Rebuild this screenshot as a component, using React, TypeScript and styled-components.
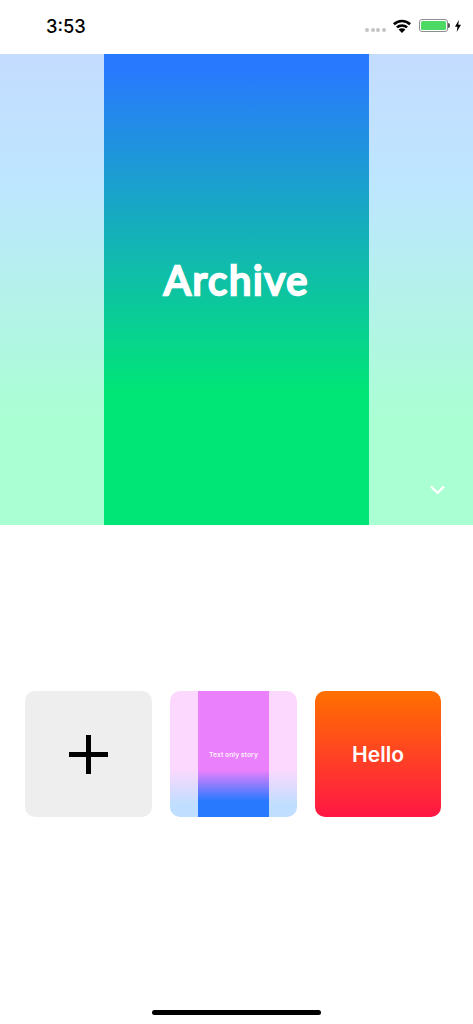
import styled, { createGlobalStyle } from "styled-components";

const GlobalStyle = createGlobalStyle`
  html, body {
    margin: 0;
    padding: 0;
    background: #ffffff;
  }
  * {
    box-sizing: border-box;
  }
`;

const heroGradient = "linear-gradient(180deg, #2979ff 3%, #00e676 72%)";
const heroSideGradient =
  "linear-gradient(180deg, #c4dcff 0%, #bde6ff 28%, #b4f2ea 52%, #aaffd3 78%, #aaffd3 100%)";
const pinkGradient = "linear-gradient(180deg, #ea80fc 63%, #2979ff 87%)";
const pinkSideGradient = "linear-gradient(180deg, #fdd8fe 62%, #c0deff 90%)";

export default function App() {
  return (
    <Screen>
      <GlobalStyle />
      <StatusBar>
        <Time>3:53</Time>
        <StatusIcons>
          <SignalDots>
            <Dot />
            <Dot />
            <Dot />
            <Dot />
          </SignalDots>
          <svg width="18" height="14" viewBox="0 0 18 14">
            <path d="M0.9 5.3C5.5 0.9 12.5 0.9 17.1 5.3" fill="none" stroke="#000" strokeWidth="2.6" />
            <path d="M3.9 8.4C6.8 5.8 11.2 5.8 14.1 8.4" fill="none" stroke="#000" strokeWidth="2.6" />
            <path d="M5.6 10.4C7.6 8.7 10.4 8.7 12.4 10.4L9 14Z" fill="#000" />
          </svg>
          <Battery>
            <BatteryFill />
          </Battery>
          <svg width="6" height="12" viewBox="0 0 6 12">
            <path d="M3.8 0L0 6.8H2.5L1.7 12L6 4.8H3.3Z" fill="#000" />
          </svg>
        </StatusIcons>
      </StatusBar>

      <Hero>
        <Side $gradient={heroSideGradient} />
        <Center $gradient={heroGradient}>
          <HeroTitle>Archive</HeroTitle>
        </Center>
        <Side $gradient={heroSideGradient} />
        <Chevron width="15" height="10" viewBox="0 0 15 10">
          <path d="M1 1.4L7.5 7.9L14 1.4" fill="none" stroke="#fff" strokeWidth="2.2" />
        </Chevron>
      </Hero>

      <Thumbs>
        <AddCard>
          <svg width="39" height="39" viewBox="0 0 39 39">
            <path d="M19.5 0V39M0 19.5H39" stroke="#000" strokeWidth="5" />
          </svg>
        </AddCard>
        <StoryCard>
          <Side $gradient={pinkSideGradient} />
          <Center $gradient={pinkGradient}>
            <StoryText>Text only story</StoryText>
          </Center>
          <Side $gradient={pinkSideGradient} />
        </StoryCard>
        <HelloCard>Hello</HelloCard>
      </Thumbs>

      <HomeIndicator />
    </Screen>
  );
}

const Screen = styled.div`
  position: relative;
  width: 473px;
  height: 1024px;
  overflow: hidden;
  background: #ffffff;
  font-family: Inter, "Liberation Sans", sans-serif;
`;

const StatusBar = styled.div`
  display: flex;
  align-items: center;
  justify-content: space-between;
  height: 54px;
  padding: 0 12px 0 46px;
`;

const Time = styled.div`
  margin-top: -2px;
  font-size: 18.3px;
  font-weight: 500;
  color: #000000;
`;

const StatusIcons = styled.div`
  display: flex;
  align-items: center;
  gap: 7px;
  margin-top: -3px;
`;

const SignalDots = styled.div`
  display: flex;
  gap: 1.6px;
  margin: 8px 0 0 0;
`;

const Dot = styled.span`
  width: 4px;
  height: 4px;
  border-radius: 50%;
  background: #c4c4c4;
`;

const Battery = styled.div`
  position: relative;
  width: 29px;
  height: 13px;
  padding: 1px;
  margin-left: 1px;
  border: 1px solid #8e8e8e;
  border-radius: 3px;
  &::after {
    content: "";
    position: absolute;
    right: -3px;
    top: 3px;
    width: 2px;
    height: 5px;
    border-radius: 0 2px 2px 0;
    background: #555555;
  }
`;

const BatteryFill = styled.div`
  height: 100%;
  border-radius: 1.5px;
  background: #4cd964;
`;

const Hero = styled.div`
  position: relative;
  display: grid;
  grid-template-columns: 104px 1fr 104px;
  height: 471px;
`;

const Side = styled.div<{ $gradient: string }>`
  background: ${(props) => props.$gradient};
`;

const Center = styled.div<{ $gradient: string }>`
  display: flex;
  align-items: center;
  justify-content: center;
  background: ${(props) => props.$gradient};
`;

const HeroTitle = styled.div`
  margin-bottom: 20px;
  font-family: Lato, sans-serif;
  font-size: 40px;
  font-weight: 400;
  letter-spacing: 1.8px;
  color: #ffffff;
  -webkit-text-stroke: 2.4px #ffffff;
`;

const Chevron = styled.svg`
  position: absolute;
  right: 28px;
  bottom: 30px;
`;

const Thumbs = styled.div`
  display: flex;
  gap: 18px;
  padding: 166px 0 0 25px;
`;

const AddCard = styled.div`
  display: flex;
  align-items: center;
  justify-content: center;
  width: 127px;
  height: 126px;
  border-radius: 10px;
  background: #eeeeee;
`;

const StoryCard = styled.div`
  display: grid;
  grid-template-columns: 28px 1fr 28px;
  width: 127px;
  height: 126px;
  overflow: hidden;
  border-radius: 10px;
`;

const StoryText = styled.div`
  font-size: 6.8px;
  font-weight: 600;
  white-space: nowrap;
  color: rgba(255, 255, 255, 0.9);
`;

const HelloCard = styled.div`
  display: flex;
  align-items: center;
  justify-content: center;
  width: 126px;
  height: 126px;
  border-radius: 10px;
  font-size: 21px;
  font-weight: 600;
  color: #ffffff;
  background: linear-gradient(180deg, #ff7000 0%, #ff1744 100%);
`;

const HomeIndicator = styled.div`
  position: absolute;
  left: 152px;
  bottom: 9px;
  width: 169px;
  height: 5px;
  border-radius: 3px;
  background: #000000;
`;
